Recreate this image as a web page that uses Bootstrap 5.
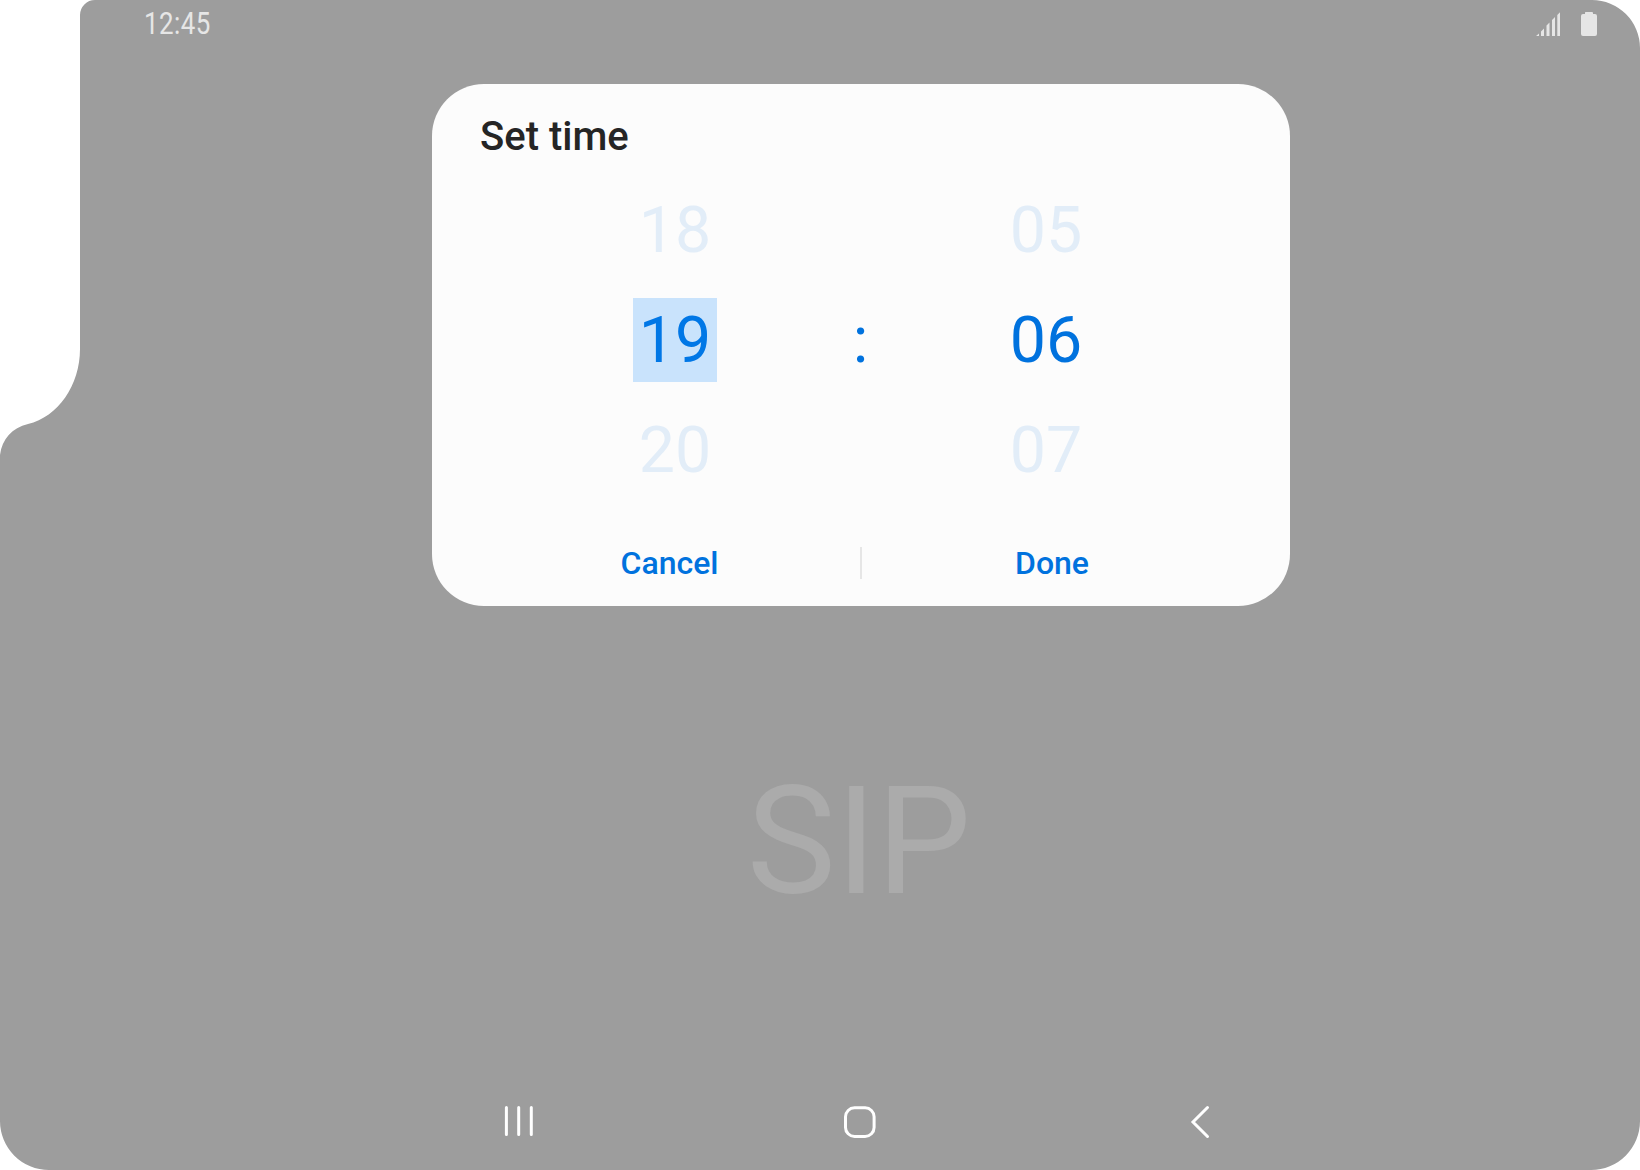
<!DOCTYPE html>
<html lang="en">
<head>
<meta charset="utf-8">
<meta name="viewport" content="width=device-width, initial-scale=1">
<title>Set time</title>
<link href="https://cdn.jsdelivr.net/npm/bootstrap@5.3.0/dist/css/bootstrap.min.css" rel="stylesheet">
<style>
body{background:#fff;font-family:Roboto,"Liberation Sans",sans-serif;overflow:hidden}
.screen{width:1640px;height:1170px;background:#9d9d9d;clip-path:path("M80 15A15 15 0 0 1 95 0H1592A48 48 0 0 1 1640 48V1121A49 49 0 0 1 1591 1170H49A49 49 0 0 1 0 1121V455C2 439 12 428 28 424C58 417 80 385 80 349Z")}
.status-bar{height:84px;padding:7px 42px 0 144px;color:#e6e6e6}
.clock{font-size:30.5px;line-height:34px;letter-spacing:.5px;transform:scaleX(.85);transform-origin:0 50%}
.status-icons{padding-top:5px;gap:19px}
.dialog{width:858px;height:522px;margin-left:432px;border-radius:52px;background:#fcfcfc;padding:29px 46px 0 46px;color:#252525}
.dialog-title{font-size:40px;line-height:48px;font-weight:500;padding-left:2px}
.wheels{margin:27px 156px 0 155px}
.wheel{gap:26px;width:84px}
.num{font-size:64.5px;line-height:85px;height:84px;width:84px;text-align:center;color:#e2edf8}
.num.on{color:#0072de}
.num.focused{background:#c9e3fc;color:#0077e6}
.actions{margin-top:51px;height:40px}
.act{font-size:32px;line-height:40px;font-weight:500;color:#0072de;text-decoration:none}
.act-start{padding-left:1px}
.act-end{padding-right:2px}
.rule-v{width:2px;height:32px;background:#e6e6e6}
.sip-area{padding:148px 0 0 78px}
.sip{font-size:150px;line-height:176px;color:#ababab}
.nav-keys{height:70px;padding:0 430px 0 503px}
.key-home{margin-right:5px}
</style>
<script src="https://cdn.jsdelivr.net/npm/bootstrap@5.3.0/dist/js/bootstrap.bundle.min.js"></script>
</head>
<body>
<main class="screen d-flex flex-column">
  <header class="status-bar d-flex justify-content-between align-items-start">
    <div class="clock">12:45</div>
    <div class="status-icons d-flex">
      <svg width="26" height="25" viewBox="0 0 26 25" fill="#e6e6e6"><path d="M0 24L3 21.5V24ZM5 24V19.5L8 16.5V24ZM10.5 24V13.5L13.5 10.5V24ZM16 24V8L19 5V24ZM21.3 24V3L24 .2V24Z"/></svg>
      <svg width="17" height="25" viewBox="0 0 17 25" fill="#e6e6e6"><path d="M4.500 0H11Q12 0 12 1V2H14Q16 2 16 4V22Q16 24 14 24H2Q0 24 0 22V4Q0 2 2 2H4V1Q4 0 4.500 0Z"/></svg>
    </div>
  </header>
  <section class="dialog flex-shrink-0">
    <h1 class="dialog-title mb-0">Set time</h1>
    <div class="wheels d-flex justify-content-between align-items-center">
      <div class="wheel d-flex flex-column">
        <div class="num">18</div><div class="num focused">19</div><div class="num">20</div>
      </div>
      <div class="num on">:</div>
      <div class="wheel d-flex flex-column">
        <div class="num">05</div><div class="num on">06</div><div class="num">07</div>
      </div>
    </div>
    <div class="actions d-flex align-items-center">
      <a class="act act-start flex-fill w-50 text-center" href="#">Cancel</a>
      <div class="rule-v flex-shrink-0"></div>
      <a class="act act-end flex-fill w-50 text-center" href="#">Done</a>
    </div>
  </section>
  <div class="sip-area text-center"><div class="sip">SIP</div></div>
  <nav class="nav-keys mt-auto d-flex justify-content-between align-items-start">
    <svg width="32" height="36" viewBox="0 0 32 36" stroke="#fff" stroke-width="3" stroke-linecap="round"><path d="M3.400 7.500V34.500M15.700 7.500V34.500M28.300 7.500V34.500"/></svg>
    <svg class="key-home" width="34" height="40" viewBox="0 0 34 40" fill="none" stroke="#fff" stroke-width="3"><rect x="2.500" y="7.800" width="28.600" height="28.600" rx="9"/></svg>
    <svg width="20" height="40" viewBox="0 0 20 40" fill="none" stroke="#fff" stroke-width="3" stroke-linecap="round"><path d="M17.500 7.500L3 22L17.500 36.500"/></svg>
  </nav>
</main>
</body>
</html>
